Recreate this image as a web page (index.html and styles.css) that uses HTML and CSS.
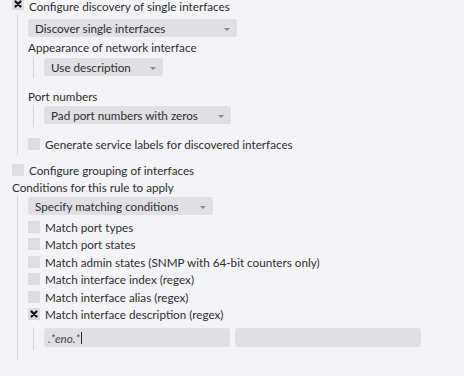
FILE: index.html
```html
<!DOCTYPE html>
<html>
<head>
<meta charset="utf-8">
<link rel="stylesheet" href="styles.css">
</head>
<body>
<div class="page">
  <div class="cb-row first">
    <span class="cb checked"><svg viewBox="0 0 12 12" width="12" height="12"><path d="M3.5 3.5 L8.5 8.5 M8.5 3.5 L3.5 8.5" stroke="#111" stroke-width="2.2" stroke-linecap="round"/></svg></span>
    <span class="lbl">Configure discovery of single interfaces</span>
  </div>
  <div class="indent block1">
    <div class="select w208"><span>Discover single interfaces</span><i class="arrow"></i></div>
    <div class="title t-appear">Appearance of network interface</div>
    <div class="indent2 sub1">
      <div class="select w118"><span>Use description</span><i class="arrow"></i></div>
    </div>
    <div class="title t-port">Port numbers</div>
    <div class="indent2 sub2">
      <div class="select w186"><span>Pad port numbers with zeros</span><i class="arrow"></i></div>
    </div>
    <div class="cb-row gen">
      <span class="cb"></span>
      <span class="lbl">Generate service labels for discovered interfaces</span>
    </div>
  </div>
  <div class="cb-row group">
    <span class="cb"></span>
    <span class="lbl">Configure grouping of interfaces</span>
  </div>
  <div class="title t-cond">Conditions for this rule to apply</div>
  <div class="indent block2">
    <div class="select w184"><span>Specify matching conditions</span><i class="arrow"></i></div>
    <div class="list">
      <div class="cb-row item"><span class="cb"></span><span class="lbl">Match port types</span></div>
      <div class="cb-row item"><span class="cb"></span><span class="lbl">Match port states</span></div>
      <div class="cb-row item"><span class="cb"></span><span class="lbl">Match admin states (SNMP with 64-bit counters only)</span></div>
      <div class="cb-row item"><span class="cb"></span><span class="lbl">Match interface index (regex)</span></div>
      <div class="cb-row item"><span class="cb"></span><span class="lbl">Match interface alias (regex)</span></div>
      <div class="cb-row item"><span class="cb checked"><svg viewBox="0 0 12 12" width="12" height="12"><path d="M3.5 3.5 L8.5 8.5 M8.5 3.5 L3.5 8.5" stroke="#111" stroke-width="2.2" stroke-linecap="round"/></svg></span><span class="lbl">Match interface description (regex)</span></div>
    </div>
    <div class="indent2 sub3">
      <div class="inputs">
        <div class="input"><span class="val">.*eno.*</span><span class="caret"></span></div>
        <div class="input"></div>
      </div>
    </div>
  </div>
</div>
</body>
</html>
```

FILE: styles.css
```css
html, body {
  margin: 0;
  padding: 0;
  background: #f4f4f8;
  height: 100%;
  overflow: hidden;
}
body {
  font-family: Lato, "Open Sans", sans-serif;
  font-size: 11.7px;
  color: #2e2e2e;
}
.page {
  padding-left: 12px;
  margin-top: -2px;
}
.cb-row {
  display: flex;
  align-items: center;
  gap: 5px;
  height: 12px;
}
.cb {
  width: 12px;
  height: 12px;
  background: #dcdce1;
  flex: none;
  display: flex;
}
.lbl {
  line-height: 12px;
  white-space: nowrap;
}
.first .lbl {
  margin-top: 3px;
}
.indent {
  margin-left: 5px;
  border-left: 1px solid #d6d6db;
  padding-left: 10px;
}
.indent2 {
  margin-left: 5px;
  border-left: 1px solid #d6d6db;
  padding-left: 10px;
}
.block1 {
  margin-top: 4px;
  padding-top: 5px;
  padding-bottom: 5px;
}
.select {
  height: 18px;
  background: #dfdfe4;
  border-radius: 3px;
  display: flex;
  align-items: center;
  justify-content: space-between;
  padding: 0 7px 0 7px;
  box-sizing: border-box;
  white-space: nowrap;
}
.w208 { width: 209px; }
.w118 { width: 119px; }
.w186 { width: 187px; }
.w184 { width: 185px; }
.arrow {
  width: 0;
  height: 0;
  border-left: 3px solid transparent;
  border-right: 3px solid transparent;
  border-top: 3px solid #8a8a90;
  margin-top: 2px;
}
.title {
  line-height: 14px;
  height: 14px;
  white-space: nowrap;
}
.t-appear { margin-top: 3px; }
.sub1 {
  margin-top: 3px;
  padding-top: 1px;
  padding-bottom: 2px;
}
.t-port { margin-top: 11px; }
.sub2 {
  margin-top: 2px;
  padding-top: 1px;
  padding-bottom: 3px;
}
.gen { margin-top: 11px; }
.group { margin-top: 9px; }
.t-cond { margin-top: 4px; }
.block2 {
  margin-top: 2px;
  padding-top: 1px;
  padding-bottom: 10px;
}
.list {
  margin-top: 3px;
  display: flex;
  flex-direction: column;
}
.item {
  height: 17.5px;
}
.sub3 {
  margin-top: 4px;
  padding-top: 1px;
  padding-bottom: 3px;
}
.inputs {
  display: flex;
  gap: 5px;
}
.input {
  width: 186px;
  height: 19px;
  background: #dfdfe4;
  border-radius: 3px;
  display: flex;
  align-items: center;
  padding-left: 4px;
  box-sizing: border-box;
}
.val {
  font-style: italic;
  color: #444;
}
.caret {
  width: 1px;
  height: 12px;
  background: #222;
  margin-left: 1px;
}
```
